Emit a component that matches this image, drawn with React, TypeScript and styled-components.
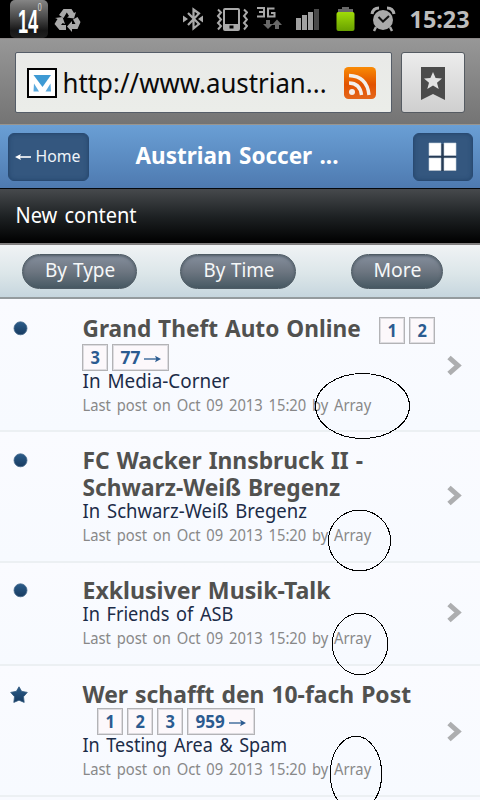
import React, { useLayoutEffect, useRef, useState } from "react";
import styled, { createGlobalStyle } from "styled-components";

const GlobalStyle = createGlobalStyle`
  html, body { margin: 0; padding: 0; background: #f8faff; }
  body { overflow: hidden; }
  body, button { font-family: "Noto Sans", "Open Sans", sans-serif; }
  * { box-sizing: border-box; }
`;

const Screen = styled.main`
  position: relative;
  width: 480px;
  height: 800px;
  overflow: hidden;
  background: #f8faff;
`;

/* Single line of text, condensed or widened to the given width */
const LineBox = styled.span<{ $w: number; $h: number; $size: number; $bold?: boolean; $color: string; $space: number }>`
  display: block;
  flex: none;
  width: ${(p) => p.$w}px;
  height: ${(p) => p.$h}px;
  line-height: ${(p) => p.$h}px;
  font-size: ${(p) => p.$size}px;
  font-weight: ${(p) => (p.$bold ? 700 : 400)};
  color: ${(p) => p.$color};
  word-spacing: ${(p) => p.$space}px;
  text-align: left;
  white-space: nowrap;
`;
const LineText = styled.span`
  display: inline-block;
  transform-origin: 0 50%;
`;

type LineProps = { w: number; h: number; size: number; bold?: boolean; color: string; space?: number; children: string };

function Line({ w, h, size, bold, color, space = 0, children }: LineProps) {
  const ref = useRef<HTMLSpanElement>(null);
  const [scale, setScale] = useState(1);
  useLayoutEffect(() => {
    if (ref.current && ref.current.offsetWidth) setScale(w / ref.current.offsetWidth);
  }, [w, children]);
  return (
    <LineBox $w={w} $h={h} $size={size} $bold={bold} $color={color} $space={space}>
      <LineText ref={ref} style={{ transform: `translateX(0.5px) scaleX(${scale})` }}>{children}</LineText>
    </LineBox>
  );
}

/* ---------- status bar ---------- */
const StatusBar = styled.header`
  display: flex;
  align-items: flex-start;
  height: 39px;
  padding-left: 10px;
  background: #000;
  border-bottom: 1px solid #8c8888;
`;
const Temperature = styled.div`
  display: flex;
  width: 38px;
  height: 38px;
  padding: 0 0 0 8px;
  border-radius: 5px;
  background: linear-gradient(#858585, #4b4b4b 45%, #171717 80%, #202020);
`;
const TempNumber = styled.span`
  display: block;
  width: 19px;
  height: 38px;
  font: 700 33px/43px "Liberation Sans", sans-serif;
  color: #fff;
  transform: scaleX(0.55);
  transform-origin: 0 0;
`;
const TempDegree = styled.span`
  font: 400 10px/15px "Liberation Sans", sans-serif;
  color: #ddd;
  transform: scaleX(0.7);
`;
const StatusIcon = styled.svg<{ $gap: number }>`
  display: block;
  flex: none;
  margin-left: ${(p) => p.$gap}px;
`;
const Clock = styled.div`
  margin-left: 13px;
`;

/* ---------- browser bar ---------- */
const BrowserBar = styled.div`
  display: flex;
  gap: 9px;
  height: 86px;
  padding: 13px 15px 0;
  background: linear-gradient(#979797, #747474);
  border-bottom: 1px solid #99958e;
`;
const AddressField = styled.div`
  display: flex;
  align-items: center;
  width: 377px;
  height: 61px;
  padding-left: 11px;
  background: linear-gradient(#e9eae8, #ebede9);
  border: 1px solid #555d68;
  border-radius: 2px;
`;
const Favicon = styled.svg`
  display: block;
  margin-right: 5px;
`;
const FeedIcon = styled.svg`
  display: block;
  margin-left: 18px;
`;
const BookmarkButton = styled.button`
  display: flex;
  justify-content: center;
  align-items: center;
  width: 64px;
  height: 61px;
  padding: 3px 0 0;
  border: 1px solid #555b62;
  border-radius: 3px;
  background: linear-gradient(#ececec, #cfcfcf);
`;

/* ---------- site header ---------- */
const SiteHeader = styled.div`
  display: flex;
  align-items: flex-start;
  height: 64px;
  padding: 8px 7px 0 8px;
  background: linear-gradient(#6a9fd5, #4e7ab0);
  border-bottom: 1px solid #05080c;
`;
const HeaderButton = styled.button<{ $w: number }>`
  display: flex;
  align-items: center;
  width: ${(p) => p.$w}px;
  height: 48px;
  padding: 0 0 3px 6px;
  border: 1px solid #294a72;
  border-radius: 6px;
  background: #34577f;
  box-shadow: inset 0 0 4px #24466d;
`;
const HomeArrow = styled.svg`
  display: block;
  margin: 3px 4px 0 0;
`;
const SiteTitle = styled.div`
  width: 278px;
  margin: 0 0 0 46px;
`;
const SectionBar = styled.div`
  height: 54px;
  padding: 12px 0 0 15px;
  background: linear-gradient(#474a4d, #1e2224 50%, #000);
`;
const FilterBar = styled.nav`
  display: flex;
  height: 56px;
  padding: 9px 0 0 22px;
  border-top: 2px solid #807e7e;
  border-bottom: 2px solid #949b9e;
  background: linear-gradient(#f0f3f5, #dce6e9 55%, #c6d6de);
`;
const Pill = styled.button<{ $w: number; $gap: number }>`
  display: flex;
  justify-content: center;
  width: ${(p) => p.$w}px;
  height: 35px;
  margin: 0 ${(p) => p.$gap}px 0 0;
  padding: 0;
  border: 1px solid #4e5b64;
  border-radius: 18px;
  background: linear-gradient(#858f9d, #6d7681 50%, #475963);
  box-shadow: inset 0 1px 3px #4c5964;
`;

/* ---------- topic list ---------- */
const TopicRow = styled.article<{ $h: number; $top: number }>`
  display: flex;
  height: ${(p) => p.$h}px;
  padding-top: ${(p) => p.$top}px;
  border-bottom: 2px solid #ecf0f3;
  background: linear-gradient(#fafbff, #f7faff);
`;
const MarkerCell = styled.div`
  width: 82px;
  padding: 5px 0 0 10px;
`;
const TopicBody = styled.div`
  width: 364px;
`;
const TitleLine = styled.div<{ $h: number }>`
  display: flex;
  height: ${(p) => p.$h}px;
`;
const Chips = styled.div<{ $left: number; $top: number }>`
  display: flex;
  gap: 4px;
  margin: ${(p) => p.$top}px 0 0 ${(p) => p.$left}px;
`;
const Chip = styled.span<{ $w: number }>`
  display: flex;
  align-items: center;
  width: ${(p) => p.$w}px;
  height: 27px;
  padding: 0 0 0 7px;
  border: 1px solid #b3b3b6;
  background: #fcf8fb;
  box-shadow: inset 0 0 0 1px #dddce0;
`;
const ChipArrow = styled.svg`
  display: block;
  margin: 3px 0 0 5px;
`;
const Chevron = styled.svg<{ $top: number }>`
  display: block;
  flex: none;
  margin-top: ${(p) => p.$top}px;
`;
const Annotations = styled.svg`
  position: absolute;
  left: 0;
  top: 0;
  pointer-events: none;
`;

const TITLE = "#51514f";
const FORUM = "#1c2c48";
const META = "#888";

function PageChip({ label, arrow }: { label: string; arrow?: boolean }) {
  const digits = label.length;
  return (
    <Chip $w={arrow ? (digits === 3 ? 68 : 57) : 26}>
      <Line w={digits * 9.7} h={24} size={17} bold color="#2b5b90">{label}</Line>
      {arrow && (
        <ChipArrow width="18" height="8" viewBox="0 0 18 8">
          <path d="M0 4h13" stroke="#2b5b90" strokeWidth="1.3" />
          <path d="M11 .8 17 4l-6 3.200 1.300-3.200z" fill="#2b5b90" />
        </ChipArrow>
      )}
    </Chip>
  );
}

const Gradient = ({ id }: { id: string }) => (
  <linearGradient id={id} x1="0" y1="0" x2="0" y2="1">
    <stop offset="0" stopColor="#2c5d8a" />
    <stop offset="1" stopColor="#163a60" />
  </linearGradient>
);

function Marker({ star, id }: { star?: boolean; id: string }) {
  return (
    <svg width="20" height="18" viewBox="0 0 20 18" display="block">
      <defs><Gradient id={id} /></defs>
      {star ? (
        <path d="M9 .8 11.6 5.300 17.300 6.400 13.500 10.700 14.200 16.400 9 14.200 3.800 16.400 4.500 10.700.7 6.400 6.400 5.300z" fill={`url(#${id})`} stroke="#31597d" strokeWidth=".8" strokeLinejoin="round" />
      ) : (
        <circle cx="10.500" cy="8.300" r="6.500" fill={`url(#${id})`} stroke="#476b8d" strokeWidth=".8" />
      )}
    </svg>
  );
}

type Topic = {
  titles: [string, number][];
  forum: [string, number];
  h: number;
  top: number;
  chevron: number;
  star?: boolean;
  inline?: string[];
  pages?: string[];
  indent?: number;
};

const topics: Topic[] = [
  { titles: [["Grand Theft Auto Online", 278]], forum: ["In Media-Corner", 147], h: 133, top: 16, chevron: 40, inline: ["1", "2"], pages: ["3", "77"], indent: 0 },
  { titles: [["FC Wacker Innsbruck II -", 281], ["Schwarz-Weiß Bregenz", 257.5]], forum: ["In Schwarz-Weiß Bregenz", 224], h: 131, top: 15, chevron: 38 },
  { titles: [["Exklusiver Musik-Talk", 248.5]], forum: ["In Friends of ASB", 151], h: 103, top: 14, chevron: 25 },
  { titles: [["Wer schafft den 10-fach Post", 328.5]], forum: ["In Testing Area & Spam", 205], h: 131, top: 15, chevron: 40, star: true, pages: ["1", "2", "3", "959"], indent: 15 },
];

function TopicItem({ t, id }: { t: Topic; id: string }) {
  return (
    <TopicRow $h={t.h} $top={t.top}>
      <MarkerCell><Marker star={t.star} id={id} /></MarkerCell>
      <TopicBody>
        {t.titles.map(([text, w]) => (
          <TitleLine key={text} $h={t.inline ? 29 : 27}>
            <Line w={w} h={27} size={22.5} bold color={TITLE} space={1}>{text}</Line>
            {t.inline && (
              <Chips $left={19} $top={2}>
                {t.inline.map((n) => <PageChip key={n} label={n} />)}
              </Chips>
            )}
          </TitleLine>
        ))}
        {t.pages && (
          <Chips $left={t.indent ?? 0} $top={0}>
            {t.pages.map((n) => <PageChip key={n} label={n} arrow={n.length > 1} />)}
          </Chips>
        )}
        <Line w={t.forum[1]} h={20} size={19} color={FORUM} space={2}>{t.forum[0]}</Line>
        <Line w={288.5} h={27} size={16.5} color={META} space={2.2}>Last post on Oct 09 2013 15:20 by Array</Line>
      </TopicBody>
      <Chevron $top={t.chevron} width="18" height="22" viewBox="0 0 18 22">
        <path d="M3 2.500 12 10.500 3 18.500" fill="none" stroke="#adaeb0" strokeWidth="5" />
      </Chevron>
    </TopicRow>
  );
}

export default function App() {
  return (
    <Screen>
      <GlobalStyle />
      <StatusBar>
        <Temperature>
          <TempNumber>14</TempNumber>
          <TempDegree>0</TempDegree>
        </Temperature>
        <StatusIcon $gap={6} width="28" height="38" viewBox="0 0 28 38">
          <g fill="#a9a9a9">
            <path d="M9.500 9h8l2.500 4 2-1-2 6.500-7-1 2-1.500-2.200-3.500L9.500 18 5 15z" />
            <path d="M19 19.500l4.500-2.500 3 5-3 7H18v3l-5-5.500 5-5.500v3h3.500z" />
            <path d="M1 18l7.500-1 2.500 7-2.300-1L7 25h5v5H5.500L.5 24l3-5z" />
          </g>
        </StatusIcon>
        <StatusIcon $gap={101} width="21" height="38" viewBox="0 0 21 38">
          <path d="M5 13 16 24 10.500 28.500V9.500L16 13.500 5 25" fill="none" stroke="#aaa" strokeWidth="2.200" />
          <path d="M0 15.500l5 3.500-5 3.500zM20 15.500l-5 3.500 5 3.500z" fill="#aaa" />
        </StatusIcon>
        <StatusIcon $gap={12} width="32" height="38" viewBox="0 0 32 38">
          <path d="M9 9h13q1 0 1 1v19q0 1-1 1H9q-1 0-1-1V10q0-1 1-1z" fill="none" stroke="#aaa" strokeWidth="2" />
          <path d="M9 24h13v5H9z" fill="#aaa" />
          <path d="M13.500 25.500h4v3h-4z" fill="#000" />
          <path d="M2 9.500l3 3-3 3.500 3 3.500-3 3.500 3 3-3 3.500M28 9.500l3 3-3 3.500 3 3.500-3 3.500 3 3-3 3.500" fill="none" stroke="#aaa" strokeWidth="2" />
        </StatusIcon>
        <StatusIcon $gap={9} width="26" height="38" viewBox="0 0 26 38">
          <path d="M0 8h7v8.500H0M2 12h5M17.500 8.500H11v8h6.500V13H14" fill="none" stroke="#a6a6a6" strokeWidth="2" />
          <path d="M9 20h4v4h3l-5 5-5-5h3zM18 29h4v-4h3l-5-5.500-5 5.500h3z" fill="#686868" />
        </StatusIcon>
        <StatusIcon $gap={13} width="24" height="38" viewBox="0 0 24 38">
          <path d="M0 18h5v12H0zM6 15h5v15H6zM12 12h5v18h-5z" fill="#a0a0a0" />
          <path d="M18 9h5v21h-5z" fill="#4a4a4a" />
        </StatusIcon>
        <StatusIcon $gap={16} width="20" height="38" viewBox="0 0 20 38">
          <defs>
            <linearGradient id="batt" x1="0" y1="0" x2="0" y2="1">
              <stop offset="0" stopColor="#a0dc08" /><stop offset="1" stopColor="#68a000" />
            </linearGradient>
          </defs>
          <path d="M6 7h7v2h4v4H2V9h4z" fill="#686868" />
          <rect x=".5" y="12" width="18" height="19" rx="2" fill="url(#batt)" />
        </StatusIcon>
        <StatusIcon $gap={14} width="26" height="38" viewBox="0 0 26 38">
          <circle cx="13" cy="20" r="10" fill="#aaa" />
          <path d="M2 14Q3 8 9 8M24 14Q23 8 17 8" fill="none" stroke="#aaa" strokeWidth="3" />
          <path d="M6 27l-2 4M20 27l2 4" stroke="#aaa" strokeWidth="2.500" />
          <path d="M8.500 17l4.500 4.500L19 16" fill="none" stroke="#111" strokeWidth="2" />
        </StatusIcon>
        <Clock><Line w={60} h={38} size={23} bold color="#bdbdbd">15:23</Line></Clock>
      </StatusBar>

      <BrowserBar>
        <AddressField>
          <Favicon width="30" height="30" viewBox="0 0 30 30">
            <rect x="1" y="1" width="28" height="28" fill="#fff" stroke="#000" strokeWidth="2" />
            <path d="M6.500 7h17.500L15.500 19z" fill="#3e9ad4" />
            <path d="M7 15.500l5 8H6.500zM23.500 15.500l-5 8H24z" fill="#5aaade" />
          </Favicon>
          <Line w={264} h={58} size={27} color="#0a0a0a">http://www.austrian...</Line>
          <FeedIcon width="32" height="32" viewBox="0 0 32 32">
            <defs>
              <linearGradient id="feed" x1="0" y1="0" x2="0" y2="1">
                <stop offset="0" stopColor="#f98b05" /><stop offset=".55" stopColor="#e25200" /><stop offset="1" stopColor="#e4661a" />
              </linearGradient>
            </defs>
            <rect width="32" height="32" rx="4.500" fill="url(#feed)" />
            <circle cx="8" cy="25" r="3" fill="#f3efeb" />
            <path d="M5 16q11 0 12.500 12M5 8.500Q23 9 25 28" fill="none" stroke="#f3efeb" strokeWidth="3.400" />
          </FeedIcon>
        </AddressField>
        <BookmarkButton aria-label="Bookmarks">
          <svg width="26" height="34" viewBox="0 0 26 34" display="block">
            <path d="M1 0h24v33l-12-6-12 6z" fill="#4b4b4b" />
            <path d="M13 5l2.600 6 6.400.4-5 4.300 1.700 6.300-5.700-3.400L7.300 22 9 15.700 4 11.400l6.400-.4z" fill="#e2e2e2" />
          </svg>
        </BookmarkButton>
      </BrowserBar>

      <SiteHeader>
        <HeaderButton $w={81}>
          <HomeArrow width="16" height="8" viewBox="0 0 16 8">
            <path d="M3 4h13" stroke="#fff" strokeWidth="1.600" />
            <path d="M6 .9 0 4l6 3.100L4.800 4z" fill="#fff" />
          </HomeArrow>
          <Line w={45.5} h={24} size={16} color="#eef3f8">Home</Line>
        </HeaderButton>
        <SiteTitle><Line w={203} h={46} size={22.500} bold color="#fff" space={1.5}>Austrian Soccer ...</Line></SiteTitle>
        <HeaderButton $w={60} aria-label="Menu">
          <svg width="44" height="32" viewBox="0 0 44 32" display="block">
            <path d="M9 4h27v27H9z" fill="#263b55" />
            <path d="M9 3h12v12.500H9zM24 3h12v12.500H24zM9 18h12v12.500H9zM24 18h12v12.500H24z" fill="#fff" stroke="#c5d0dc" strokeWidth=".6" />
          </svg>
        </HeaderButton>
      </SiteHeader>

      <SectionBar><Line w={121} h={28} size={21} color="#fff" space={2}>New content</Line></SectionBar>

      <FilterBar>
        <Pill $w={115} $gap={43}><Line w={70} h={30} size={19} color="#f5f7f8" space={1}>By Type</Line></Pill>
        <Pill $w={116} $gap={55}><Line w={71} h={30} size={19} color="#f5f7f8" space={1}>By Time</Line></Pill>
        <Pill $w={92} $gap={0}><Line w={48} h={30} size={19} color="#f5f7f8">More</Line></Pill>
      </FilterBar>

      {topics.map((t, i) => <TopicItem key={i} t={t} id={`marker-${i}`} />)}

      <Annotations width="480" height="800" viewBox="0 0 480 800" fill="none" stroke="#000" strokeWidth="1" shapeRendering="crispEdges">
        <ellipse cx="362.500" cy="406" rx="47" ry="32.500" />
        <ellipse cx="359.500" cy="540.500" rx="31" ry="30.300" />
        <ellipse cx="360" cy="644" rx="27.700" ry="30.700" />
        <ellipse cx="356" cy="774" rx="25.700" ry="37.700" />
      </Annotations>
    </Screen>
  );
}
